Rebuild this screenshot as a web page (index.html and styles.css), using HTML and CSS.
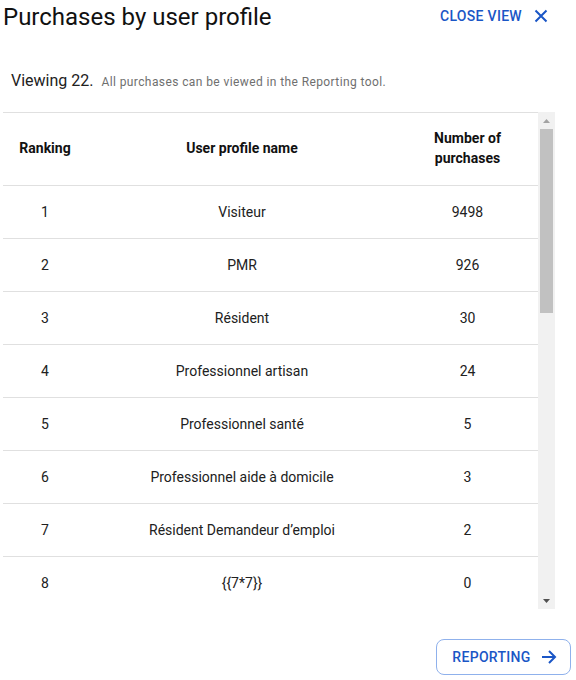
FILE: index.html
```html
<!DOCTYPE html>
<html lang="en">
<head>
<meta charset="utf-8">
<link rel="stylesheet" href="styles.css">
</head>
<body>
<div class="dialog">
  <header class="top">
    <h1 class="title">Purchases by user profile</h1>
    <button class="close">CLOSE VIEW
      <svg width="14" height="14" viewBox="0 0 14 14"><path d="M1.5 1.5L12.5 12.5M12.5 1.5L1.5 12.5" stroke="currentColor" stroke-width="2" fill="none"/></svg>
    </button>
  </header>
  <p class="summary"><span class="count">Viewing 22.</span> <span class="hint">All purchases can be viewed in the Reporting tool.</span></p>
  <div class="tablebox">
    <div class="scroller">
      <table class="grid">
        <colgroup><col class="c1"><col class="c2"><col class="c3"></colgroup>
        <thead>
          <tr><th>Ranking</th><th>User profile name</th><th>Number of<br>purchases</th></tr>
        </thead>
        <tbody>
          <tr><td>1</td><td>Visiteur</td><td>9498</td></tr>
          <tr><td>2</td><td>PMR</td><td>926</td></tr>
          <tr><td>3</td><td>Résident</td><td>30</td></tr>
          <tr><td>4</td><td>Professionnel artisan</td><td>24</td></tr>
          <tr><td>5</td><td>Professionnel santé</td><td>5</td></tr>
          <tr><td>6</td><td>Professionnel aide à domicile</td><td>3</td></tr>
          <tr><td>7</td><td>Résident Demandeur d’emploi</td><td>2</td></tr>
          <tr><td>8</td><td>{{7*7}}</td><td>0</td></tr>
        </tbody>
      </table>
    </div>
    <div class="vbar" aria-hidden="true">
      <div class="vbtn"><svg width="7" height="4" viewBox="0 0 7 4"><path d="M0 4L3.5 0L7 4Z" fill="#a3a3a3"/></svg></div>
      <div class="vtrack"><div class="vthumb"></div></div>
      <div class="vbtn"><svg width="7" height="4" viewBox="0 0 7 4"><path d="M0 0L7 0L3.5 4Z" fill="#505050"/></svg></div>
    </div>
  </div>
  <footer class="actions">
    <button class="report">REPORTING
      <svg width="16" height="16" viewBox="0 0 16 16"><path d="M1 8H14M8 2L14 8L8 14" stroke="currentColor" stroke-width="2" fill="none"/></svg>
    </button>
  </footer>
</div>
</body>
</html>
```
FILE: styles.css
```css
* { box-sizing: border-box; }
html, body { margin: 0; padding: 0; background: #fff; }
body { font-family: Roboto, "Noto Sans", Arial, sans-serif; color: #212121; }
.dialog { width: 576px; height: 680px; padding: 0 6px 0 3px; display: flex; flex-direction: column; }
.top { display: flex; justify-content: space-between; align-items: center; height: 34px; }
.title { margin: 0; font-size: 24px; font-weight: 400; color: #111; line-height: 34px; }
.close { display: flex; align-items: center; gap: 12px; border: 0; background: none; padding: 0 22px 0 0; margin-top: -2px; font: 500 14px Roboto, sans-serif; letter-spacing: 0.3px; color: #1a56c6; }
.summary { margin: 0; padding: 35px 0 0 8px; height: 78px; line-height: 24px; }
.count { font-size: 16px; color: #212121; }
.hint { font-size: 12px; color: #6f6f6f; letter-spacing: 0.4px; margin-left: 4px; }
.tablebox { display: flex; width: 552px; height: 497px; }
.scroller { width: 535px; height: 497px; overflow: hidden; border-top: 1px solid #e0e0e0; }
.vbar { width: 17px; display: flex; flex-direction: column; background: #f1f1f1; }
.vbtn { height: 17px; display: flex; align-items: center; justify-content: center; flex: none; }
.vtrack { flex: 1; padding: 0 2px; }
.vthumb { height: 184px; background: #c1c1c1; }
.grid { width: 535px; border-collapse: collapse; table-layout: fixed; font-size: 14px; }
.c1 { width: 84px; }
.c2 { width: 310px; }
.c3 { width: 141px; }
.grid th { height: 72px; font-weight: 700; color: #111; line-height: 20px; text-align: center; padding: 0 0 1px; border-bottom: 1px solid #e0e0e0; }
.grid td { height: 53px; text-align: center; padding: 0; border-bottom: 1px solid #e0e0e0; color: #212121; }
.actions { display: flex; justify-content: flex-end; padding-top: 30px; }
.report { display: flex; align-items: center; gap: 10px; height: 36px; width: 135px; justify-content: center; border: 1px solid #8fb1ec; border-radius: 8px; background: #fff; font: 500 14px Roboto, sans-serif; letter-spacing: 0.3px; color: #1a56c6; padding: 0 0 0 2px; margin-right: -1px; }
```
